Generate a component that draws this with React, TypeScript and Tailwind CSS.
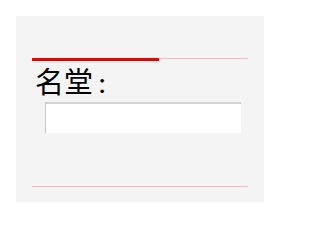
const App = () => {
  return (
    <div className="w-[280px] h-[226px] bg-white pt-4 pl-4">
      <div className="w-[248px] h-[186px] bg-[#f4f4f4] px-4 pt-[42px]">
        <div className="flex items-start">
          <div className="w-[127px] h-[3px] bg-[#cc1010]" />
          <div className="flex-1 h-px bg-[#e3c4c4]" />
        </div>
        <div className="mt-[2px] pl-[3px] text-[29px] leading-[34px] text-black font-['Noto_Sans_CJK_SC',serif]">
          名堂<span className="pl-[5px] font-['Liberation_Serif',serif] text-[30px]">:</span>
        </div>
        <div className="mt-[2px] ml-[13px] w-[196px] h-[31px] bg-white border-t-2 border-l border-t-[#d2d2d2] border-l-[#c6c6c6]" />
        <div className="mt-[53px] h-px bg-[#e3c4c4]" />
      </div>
    </div>
  );
};

export default App;
